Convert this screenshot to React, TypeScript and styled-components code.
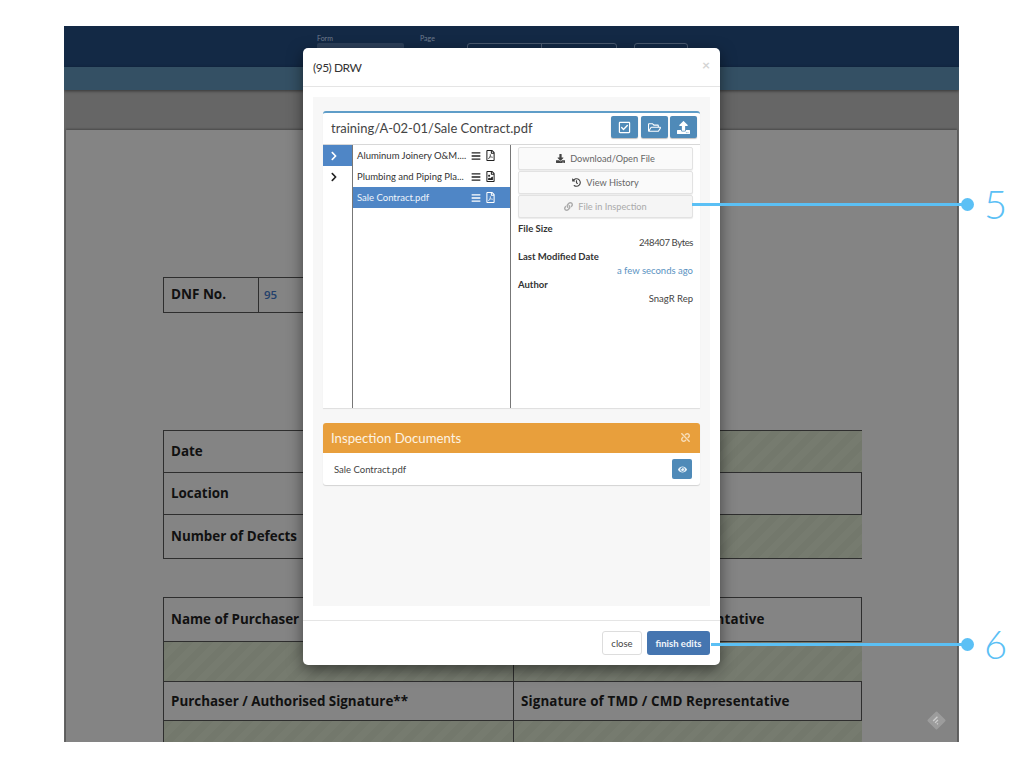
import React from "react";
import styled, { createGlobalStyle } from "styled-components";
import {
  FaBars,
  FaChevronRight,
  FaDownload,
  FaEye,
  FaHistory,
  FaLink,
  FaRegCheckSquare,
  FaRegFileImage,
  FaRegFilePdf,
  FaRegFolderOpen,
  FaUnlink,
  FaUpload,
} from "react-icons/fa";

const GlobalStyle = createGlobalStyle`
  html, body {
    margin: 0;
    padding: 0;
    background: #fff;
    font-family: "Lato", "Liberation Sans", sans-serif;
  }
`;

const files = [
  { name: "Aluminum Joinery O&M....", icon: "pdf" },
  { name: "Plumbing and Piping Pla...", icon: "image" },
  { name: "Sale Contract.pdf", icon: "pdf", active: true },
];

export default function App() {
  return (
    <Stage>
      <GlobalStyle />
      <Screen>
        <TopBar>
          <Field $width={103}>
            <FieldLabel>Form</FieldLabel>
            <FieldBox $width={87} />
          </Field>
          <Field $width={47}>
            <FieldLabel>Page</FieldLabel>
          </Field>
          <ButtonGroup>
            <GroupHalf />
          </ButtonGroup>
          <SingleButton />
        </TopBar>
        <SubBar />
        <Content>
          <Paper>
            <DnfTable>
              <DnfLabel>DNF No.</DnfLabel>
              <DnfValue>95</DnfValue>
            </DnfTable>
            <InfoTable>
              <LabelCell $height={42}>Date</LabelCell>
              <FillCell $height={42} />
              <LabelCell $height={42}>Location</LabelCell>
              <BlankCell $height={42} />
              <LabelCell $height={43} $last>Number of Defects</LabelCell>
              <FillCell $height={43} $last />
            </InfoTable>
            <SignTable>
              <SignCell $height={44}>Name of Purchaser</SignCell>
              <SignCell $height={44} $right>Name of TMD / CMD Representative</SignCell>
              <FillCell $height={40} $wide />
              <FillCell $height={40} $wide $right />
              <SignCell $height={39}>Purchaser / Authorised Signature**</SignCell>
              <SignCell $height={39} $right>Signature of TMD / CMD Representative</SignCell>
              <FillCell $height={40} $wide />
              <FillCell $height={40} $wide $right />
            </SignTable>
            <FeedBadge viewBox="0 0 20 20">
              <path d="M10 1.5 18.5 10 10 18.5 1.5 10Z" fill="#9c9c9c" stroke="#9c9c9c" strokeWidth="2" strokeLinejoin="round" />
              <path d="M10.5 5.5 6 10l1 1 4.5-4.5zM11 9l-3 3 1 1 3-3zM11 12.5l-1 1 1 1 1-1z" fill="#cdcdcd" />
            </FeedBadge>
          </Paper>
        </Content>
      </Screen>

      <Modal>
        <ModalHeader>
          <ModalTitle>(95) DRW</ModalTitle>
          <CloseX>×</CloseX>
        </ModalHeader>
        <ModalBody>
          <BrowserPanel>
            <PanelHead>
              <PathTitle>training/A-02-01/Sale Contract.pdf</PathTitle>
              <HeadActions>
                <IconButton><FaRegCheckSquare /></IconButton>
                <IconButton><FaRegFolderOpen /></IconButton>
                <IconButton><FaUpload /></IconButton>
              </HeadActions>
            </PanelHead>
            <BrowserColumns>
              <FolderColumn>
                <FolderRow $active><FaChevronRight /></FolderRow>
                <FolderRow><FaChevronRight /></FolderRow>
              </FolderColumn>
              <FileColumn>
                {files.map((f) => (
                  <FileRow key={f.name} $active={f.active}>
                    <FileName>{f.name}</FileName>
                    <FaBars />
                    {f.icon === "pdf" ? <FaRegFilePdf /> : <FaRegFileImage />}
                  </FileRow>
                ))}
              </FileColumn>
              <DetailColumn>
                <ActionButton><FaDownload />Download/Open File</ActionButton>
                <ActionButton><FaHistory />View History</ActionButton>
                <ActionButton $disabled><FaLink />File in Inspection</ActionButton>
                <DetailList>
                  <DetailLabel>File Size</DetailLabel>
                  <DetailValue $tight>248407 Bytes</DetailValue>
                  <DetailLabel>Last Modified Date</DetailLabel>
                  <DetailValue $link>a few seconds ago</DetailValue>
                  <DetailLabel>Author</DetailLabel>
                  <DetailValue>SnagR Rep</DetailValue>
                </DetailList>
              </DetailColumn>
            </BrowserColumns>
          </BrowserPanel>
          <DocsPanel>
            <DocsHead>
              <DocsTitle>Inspection Documents</DocsTitle>
              <FaUnlink />
            </DocsHead>
            <DocsRow>
              <DocName>Sale Contract.pdf</DocName>
              <EyeButton><FaEye /></EyeButton>
            </DocsRow>
          </DocsPanel>
        </ModalBody>
        <ModalFooter>
          <CloseButton>close</CloseButton>
          <FinishButton>finish edits</FinishButton>
        </ModalFooter>
      </Modal>

      <Callout $left={692} $top={186} $line={275}>
        <CalloutLine />
        <CalloutDot />
        <CalloutDigit>5</CalloutDigit>
      </Callout>
      <Callout $left={711} $top={626} $line={256}>
        <CalloutLine />
        <CalloutDot />
        <CalloutDigit>6</CalloutDigit>
      </Callout>
    </Stage>
  );
}

const Stage = styled.div`
  position: relative;
  width: 1024px;
  height: 768px;
  overflow: hidden;
  background: #fff;
`;

const Screen = styled.div`
  display: flex;
  flex-direction: column;
  width: 895px;
  height: 716px;
  margin: 26px 0 0 64px;
  overflow: hidden;
  background: #666;
`;

const TopBar = styled.div`
  display: flex;
  flex: none;
  height: 41px;
  padding: 8px 0 0 253px;
  box-sizing: border-box;
  background: #132945;
  overflow: hidden;
`;

const Field = styled.div<{ $width: number }>`
  width: ${(p) => p.$width}px;
`;

const FieldLabel = styled.div`
  font-size: 7px;
  line-height: 9px;
  color: #6f7d8f;
`;

const FieldBox = styled.div<{ $width: number }>`
  width: ${(p) => p.$width}px;
  height: 20px;
  background: #2c3f59;
  border-radius: 2px;
`;

const ButtonGroup = styled.div`
  width: 150px;
  height: 24px;
  margin: 9px 17px 0 0;
  box-sizing: border-box;
  border: 1px solid #4a5a70;
  border-radius: 3px;
`;

const GroupHalf = styled.div`
  width: 73px;
  height: 100%;
  border-right: 1px solid #4a5a70;
`;

const SingleButton = styled.div`
  width: 54px;
  height: 24px;
  margin-top: 9px;
  box-sizing: border-box;
  border: 1px solid #4a5a70;
  border-radius: 3px;
`;

const SubBar = styled.div`
  flex: none;
  height: 23px;
  background: #345064;
  box-shadow: 0 1px 3px rgba(0, 0, 0, 0.5);
  position: relative;
`;

const Content = styled.div`
  flex: 1;
  padding: 40px 2px 0;
  background: #666;
  min-height: 0;
`;

const Paper = styled.div`
  position: relative;
  height: 100%;
  padding: 147px 0 0 97px;
  box-sizing: border-box;
  background: #848484;
  box-shadow: 0 -1px 2px rgba(0, 0, 0, 0.3);
  font-family: "Open Sans", "Liberation Sans", sans-serif;
`;

const DnfTable = styled.div`
  display: grid;
  grid-template-columns: 95px 200px;
  width: 295px;
  height: 36px;
  box-sizing: border-box;
  border: 1px solid #2e2e2e;
`;

const DnfLabel = styled.div`
  display: flex;
  align-items: center;
  padding: 0 0 2px 7px;
  border-right: 1px solid #2e2e2e;
  font-size: 13.5px;
  font-weight: 700;
  color: #111;
`;

const DnfValue = styled.div`
  display: flex;
  align-items: center;
  padding: 0 0 2px 5px;
  font-size: 11.5px;
  font-weight: 600;
  color: #23406b;
`;

const InfoTable = styled.div`
  display: grid;
  grid-template-columns: 350px 348px;
  width: 699px;
  margin-top: 117px;
  box-sizing: border-box;
  border: 1px solid #2e2e2e;
`;

const SignTable = styled(InfoTable)`
  margin-top: 38px;
  border-bottom: none;
`;

const LabelCell = styled.div<{ $height: number; $last?: boolean }>`
  display: flex;
  align-items: center;
  height: ${(p) => p.$height}px;
  padding: 0 0 1px 7px;
  box-sizing: border-box;
  border-bottom: ${(p) => (p.$last ? "none" : "1px solid #2e2e2e")};
  border-right: 1px solid #2e2e2e;
  font-size: 13.4px;
  font-weight: 700;
  color: #111;
`;

const BlankCell = styled.div<{ $height: number }>`
  height: ${(p) => p.$height}px;
  box-sizing: border-box;
  border-bottom: 1px solid #2e2e2e;
`;

const FillCell = styled.div<{ $height: number; $last?: boolean; $wide?: boolean; $right?: boolean }>`
  height: ${(p) => p.$height}px;
  box-sizing: border-box;
  border-bottom: ${(p) => (p.$last ? "none" : "1px solid #2e2e2e")};
  border-right: ${(p) => (p.$wide && !p.$right ? "1px solid #2e2e2e" : "none")};
  background: repeating-linear-gradient(135deg, #73786c 0 7px, #767b6f 7px 14px);
`;

const SignCell = styled.div<{ $height: number; $right?: boolean }>`
  display: flex;
  align-items: center;
  height: ${(p) => p.$height}px;
  padding: 0 0 1px 7px;
  box-sizing: border-box;
  border-bottom: 1px solid #2e2e2e;
  border-right: ${(p) => (p.$right ? "none" : "1px solid #2e2e2e")};
  font-size: 13.4px;
  font-weight: 700;
  letter-spacing: ${(p) => (p.$right ? "0.12px" : "0")};
  color: #111;
`;

const FeedBadge = styled.svg`
  position: absolute;
  right: 11px;
  top: 581px;
  width: 19px;
  height: 19px;
`;

const Modal = styled.div`
  position: absolute;
  left: 303px;
  top: 48px;
  display: flex;
  flex-direction: column;
  width: 417px;
  height: 617px;
  background: #fff;
  border-radius: 5px;
  box-shadow: 0 5px 15px rgba(0, 0, 0, 0.5);
`;

const ModalHeader = styled.div`
  display: flex;
  flex: none;
  align-items: center;
  justify-content: space-between;
  height: 39px;
  padding: 0 10px;
  box-sizing: border-box;
  border-bottom: 1px solid #e5e5e5;
`;

const ModalTitle = styled.div`
  font-size: 12px;
  letter-spacing: -0.5px;
  color: #333;
`;

const CloseX = styled.div`
  margin-top: -6px;
  font-size: 14px;
  font-weight: 700;
  color: #d4d4d4;
`;

const ModalBody = styled.div`
  display: flex;
  flex-direction: column;
  gap: 15px;
  height: 509px;
  margin: 10px 10px 0;
  padding: 14px 10px 0;
  box-sizing: border-box;
  background: #f7f7f7;
`;

const BrowserPanel = styled.div`
  display: flex;
  flex-direction: column;
  height: 297px;
  box-sizing: border-box;
  border-top: 2px solid #5f9dc8;
  border-radius: 3px 3px 0 0;
  background: #fff;
  box-shadow: 0 1px 1px rgba(0, 0, 0, 0.1);
`;

const PanelHead = styled.div`
  display: flex;
  flex: none;
  align-items: center;
  justify-content: space-between;
  height: 32px;
  padding: 0 3px 3px 8px;
  box-sizing: border-box;
  border-bottom: 1px solid #d8d8d8;
`;

const PathTitle = styled.div`
  margin-top: 2px;
  font-size: 13px;
  color: #444;
`;

const HeadActions = styled.div`
  display: flex;
  gap: 2.5px;
`;

const IconButton = styled.div`
  display: flex;
  align-items: center;
  justify-content: center;
  width: 27px;
  height: 22px;
  border-radius: 2px;
  background: #4f8ab8;
  box-shadow: 0 1px 1px rgba(0, 0, 0, 0.25);
  color: #fff;
  font-size: 13px;
`;

const BrowserColumns = styled.div`
  display: flex;
  flex: 1;
  min-height: 0;
`;

const FolderColumn = styled.div`
  flex: none;
  width: 29px;
  border-right: 1px solid #777;
`;

const FolderRow = styled.div<{ $active?: boolean }>`
  display: flex;
  align-items: center;
  height: 21px;
  padding-left: 6px;
  background: ${(p) => (p.$active ? "#4f86c6" : "transparent")};
  color: ${(p) => (p.$active ? "#fff" : "#222")};
  font-size: 10px;
`;

const FileColumn = styled.div`
  flex: none;
  width: 157px;
  border-right: 1px solid #777;
`;

const FileRow = styled.div<{ $active?: boolean }>`
  display: flex;
  align-items: center;
  height: 21px;
  padding: 0 14px 0 4px;
  background: ${(p) => (p.$active ? "#4f86c6" : "transparent")};
  color: ${(p) => (p.$active ? "#eef4fb" : "#333")};
  font-size: 9.5px;

  svg {
    flex: none;
    font-size: 10px;
    color: ${(p) => (p.$active ? "#fff" : "#222")};
  }

  svg:last-child {
    margin-left: 4px;
    font-size: 11px;
  }
`;

const FileName = styled.span`
  flex: 1;
  white-space: nowrap;
`;

const DetailColumn = styled.div`
  display: flex;
  flex: 1;
  flex-direction: column;
  gap: 1px;
  padding: 2px 7px 0;
`;

const ActionButton = styled.div<{ $disabled?: boolean }>`
  display: flex;
  flex: none;
  align-items: center;
  justify-content: center;
  gap: 5px;
  height: 23px;
  box-sizing: border-box;
  border: 1px solid #e2e2e2;
  border-radius: 2px;
  background: ${(p) => (p.$disabled ? "#f5f5f5" : "#fafafa")};
  box-shadow: 0 1px 1px rgba(0, 0, 0, 0.08);
  color: ${(p) => (p.$disabled ? "#aaa" : "#666")};
  font-size: 9.2px;

  svg {
    font-size: 9px;
    color: ${(p) => (p.$disabled ? "#aaa" : "#444")};
  }
`;

const DetailList = styled.div`
  display: flex;
  flex-direction: column;
  margin-top: 3px;
  font-size: 9.5px;
  line-height: 14px;
`;

const DetailLabel = styled.div`
  font-weight: 700;
  color: #333;
`;

const DetailValue = styled.div<{ $link?: boolean; $tight?: boolean }>`
  text-align: right;
  letter-spacing: ${(p) => (p.$tight ? "-0.4px" : "0")};
  color: ${(p) => (p.$link ? "#5b93c2" : "#444")};
`;

const DocsPanel = styled.div`
  border-radius: 3px;
  background: #fff;
  box-shadow: 0 1px 1px rgba(0, 0, 0, 0.15);
`;

const DocsHead = styled.div`
  display: flex;
  align-items: center;
  justify-content: space-between;
  height: 30px;
  padding: 0 10px 1px 8px;
  box-sizing: border-box;
  border-radius: 3px 3px 0 0;
  background: #e89f3c;
  color: #fdf3e3;

  svg {
    font-size: 9px;
    opacity: 0.75;
  }
`;

const DocsTitle = styled.div`
  font-size: 13.2px;
`;

const DocsRow = styled.div`
  display: flex;
  align-items: center;
  justify-content: space-between;
  height: 32px;
  padding: 0 8px 0 11px;
`;

const DocName = styled.div`
  font-size: 9.5px;
  color: #444;
`;

const EyeButton = styled.div`
  display: flex;
  align-items: center;
  justify-content: center;
  width: 20px;
  height: 20px;
  border-radius: 2px;
  background: #4f8ab8;
  color: #e8f1f8;
  font-size: 9px;
`;

const ModalFooter = styled.div`
  display: flex;
  flex: 1;
  align-items: flex-start;
  justify-content: flex-end;
  gap: 5px;
  margin-top: 14px;
  padding: 10px 10px 0;
  border-top: 1px solid #e5e5e5;
`;

const CloseButton = styled.div`
  display: flex;
  align-items: center;
  justify-content: center;
  width: 40px;
  height: 24px;
  box-sizing: border-box;
  border: 1px solid #ddd;
  border-radius: 3px;
  background: #fff;
  font-size: 9.5px;
  color: #444;
`;

const FinishButton = styled.div`
  display: flex;
  align-items: center;
  justify-content: center;
  width: 63px;
  height: 24px;
  border-radius: 3px;
  background: #4575b0;
  font-size: 9.5px;
  font-weight: 700;
  color: #f2f6fb;
`;

const Callout = styled.div<{ $left: number; $top: number; $line: number }>`
  position: absolute;
  left: ${(p) => p.$left}px;
  top: ${(p) => p.$top}px;
  display: flex;
  align-items: center;
  height: 36px;
  --line: ${(p) => p.$line}px;
`;

const CalloutLine = styled.div`
  width: var(--line);
  height: 3px;
  background: #5bc0f5;
`;

const CalloutDot = styled.div`
  width: 13px;
  height: 13px;
  margin-left: -6px;
  border-radius: 50%;
  background: #5bc0f5;
`;

const CalloutDigit = styled.div`
  margin-left: 10px;
  font-size: 40px;
  font-weight: 300;
  line-height: 36px;
  color: #5bc0f5;
`;
